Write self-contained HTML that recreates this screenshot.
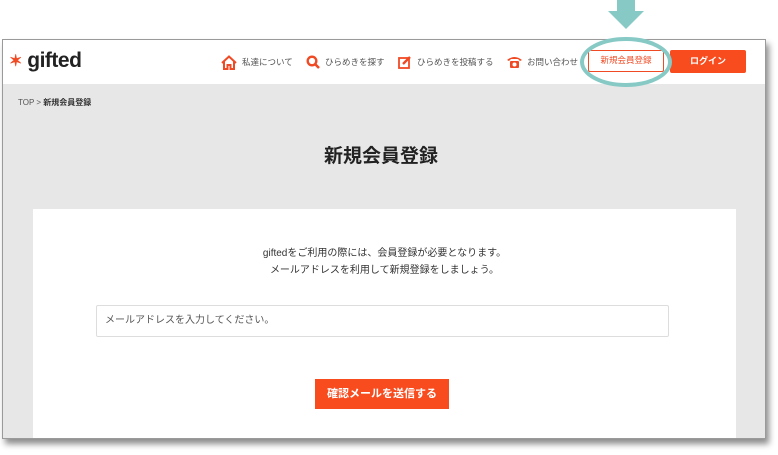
<!DOCTYPE html>
<html><head><meta charset="utf-8"><style>
*{margin:0;padding:0;box-sizing:border-box}
body{width:778px;height:455px;background:#fff;position:relative;overflow:hidden;font-family:"Liberation Sans","Noto Sans CJK JP",sans-serif;color:#333}
.win{position:absolute;left:2px;top:39px;width:764px;height:400px;border:1px solid #9a9a9a;background:#e7e7e7;box-shadow:3px 5px 6px rgba(0,0,0,.45);overflow:hidden}
.hdr{position:absolute;left:0;top:0;width:100%;height:44px;background:#fff}
.a{position:absolute;font-size:8.5px;color:#555;white-space:nowrap}
.card{position:absolute;left:30px;top:169px;width:703px;height:240px;background:#fff}
</style></head><body>
<svg style="position:absolute;left:608px;top:0" width="40" height="30"><rect x="9" y="0" width="18" height="12" fill="#86c9c5"/><polygon points="0,11 36,11 18,29" fill="#86c9c5"/></svg>
<div class="win">
 <div class="hdr">
  <div style="position:absolute;left:6px;top:9px;font-size:21px;font-weight:bold;color:#222;letter-spacing:-0.5px"><span style="color:#f04a24;font-size:16px;position:relative;top:-1px">✶</span> gifted</div>
  <svg style="position:absolute;left:218px;top:15px" width="16" height="15" viewBox="0 0 16 15"><path d="M1 8 L8 1.5 L15 8 M3 6.5 V14 H6.5 V10 H9.5 V14 H13 V6.5" fill="none" stroke="#f04a24" stroke-width="2"/></svg>
  <div class="a" style="left:239px;top:16px">私達について</div>
  <svg style="position:absolute;left:303px;top:15px" width="14" height="14"><circle cx="6" cy="6" r="4.3" fill="none" stroke="#f04a24" stroke-width="2.4"/><path d="M9 9 L13 13" stroke="#f04a24" stroke-width="2.6"/></svg>
  <div class="a" style="left:322px;top:16px">ひらめきを探す</div>
  <svg style="position:absolute;left:395px;top:15px" width="14" height="14"><rect x="1" y="3" width="10" height="10" fill="none" stroke="#f04a24" stroke-width="1.8"/><path d="M5 9 L12 2" stroke="#f04a24" stroke-width="2.4"/></svg>
  <div class="a" style="left:414px;top:16px">ひらめきを投稿する</div>
  <svg style="position:absolute;left:503px;top:14px" width="17" height="15"><path d="M1 6 Q8.5 0 16 6 L14 7 L12 5 H5 L3 7 Z" fill="#f04a24"/><rect x="4" y="7" width="9" height="7" rx="1" fill="#f04a24"/><circle cx="8.5" cy="10.5" r="2" fill="#fff"/></svg>
  <div class="a" style="left:524px;top:16px">お問い合わせ</div>
  <div style="position:absolute;left:585px;top:10px;width:76px;height:22px;border:1.5px solid #f04a24;border-radius:2px;color:#f04a24;font-size:8.5px;text-align:center;line-height:19px">新規会員登録</div>
  <div style="position:absolute;left:667px;top:10px;width:76px;height:23px;background:#f84c1f;border-radius:2px;color:#fff;font-size:9px;font-weight:bold;text-align:center;line-height:23px">ログイン</div>
 </div>
 <div style="position:absolute;left:15px;top:57px;font-size:8px;color:#555">TOP &gt; <b style="color:#333">新規会員登録</b></div>
 <div style="position:absolute;left:0;width:756px;top:101px;text-align:center;font-size:19px;font-weight:bold;color:#222">新規会員登録</div>
 <div class="card">
  <div style="position:absolute;left:0;width:100%;top:36px;text-align:center;font-size:10px;line-height:17px;color:#333">giftedをご利用の際には、会員登録が必要となります。<br>メールアドレスを利用して新規登録をしましょう。</div>
  <div style="position:absolute;left:63px;top:96px;width:573px;height:32px;border:1px solid #ddd;border-radius:2px;font-size:10px;color:#555;padding-left:8px;line-height:30px">メールアドレスを入力してください。</div>
  <div style="position:absolute;left:282px;top:170px;width:134px;height:30px;background:#f84c1f;color:#fff;font-size:11px;font-weight:bold;text-align:center;line-height:30px">確認メールを送信する</div>
 </div>
</div>
<svg style="position:absolute;left:578px;top:36px" width="96" height="54"><ellipse cx="48" cy="26" rx="44" ry="23" fill="none" stroke="#86c9c5" stroke-width="4"/></svg>
</body></html>
